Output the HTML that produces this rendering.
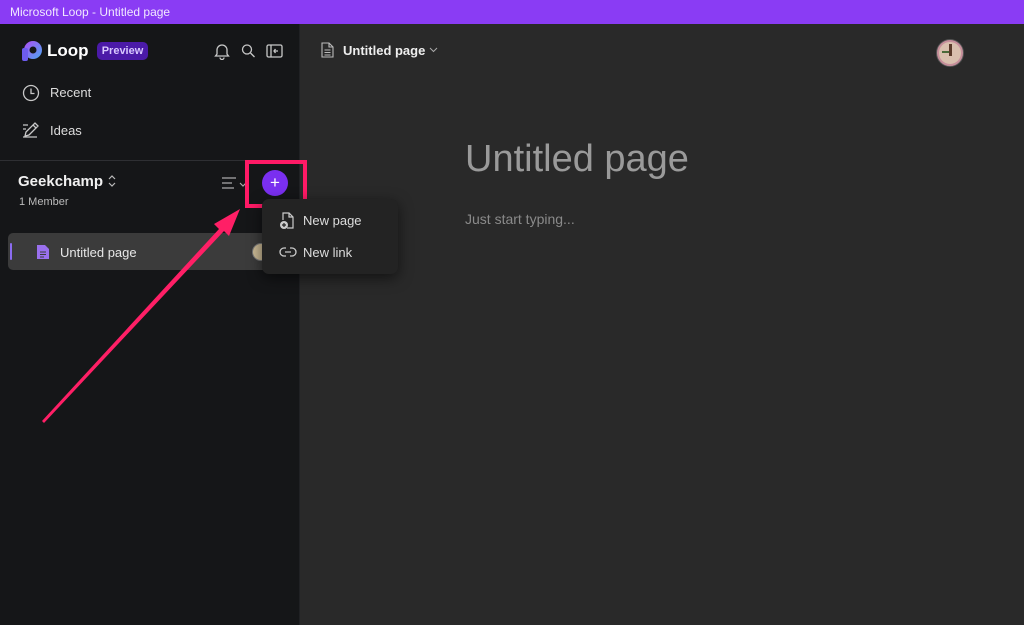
<!DOCTYPE html>
<html><head><meta charset="utf-8"><style>
*{margin:0;padding:0;box-sizing:border-box}
body{width:1024px;height:625px;overflow:hidden;background:#292929;font-family:"Liberation Sans",sans-serif;position:relative;color:#e6e6e6}
.tb{position:absolute;left:0;top:0;width:1024px;height:24px;background:#8a3cf4;color:#f0e8ff;font-size:12px;line-height:24px;padding-left:10px}
.sb{position:absolute;left:0;top:24px;width:300px;height:601px;background:#151618;border-right:1px solid #202124}
.a{position:absolute}
.t{position:absolute;white-space:nowrap}
</style></head><body>
<div class="tb">Microsoft Loop - Untitled page</div>
<div class="sb"></div>
<svg class="a" style="left:21px;top:40px" width="22" height="22" viewBox="0 0 22 22"><defs><linearGradient id="g" x1="0" y1="0" x2="1" y2="1"><stop offset="0" stop-color="#b04cf5"/><stop offset="1" stop-color="#4aa8f0"/></linearGradient></defs><circle cx="12" cy="10" r="9" fill="url(#g)"/><rect x="1" y="8" width="6" height="13" rx="2" fill="#6d5cf0"/><circle cx="12" cy="10" r="3.5" fill="#151618"/></svg>
<div class="t" style="left:47px;top:41px;font-size:17px;font-weight:bold;color:#fff">Loop</div>
<div class="a" style="left:97px;top:42px;width:51px;height:18px;background:#4b1aa8;border-radius:5px;color:#d8c8ff;font-size:11px;font-weight:bold;text-align:center;line-height:18px">Preview</div>
<svg class="a" style="left:212px;top:42px" width="72" height="18" viewBox="0 0 72 18" fill="none" stroke="#c8c8c8" stroke-width="1.3"><path d="M5 12V8a5 5 0 0 1 10 0v4l1.5 2h-13z M8 15.5a2 2 0 0 0 4 0"/><circle cx="35" cy="7.5" r="4.5"/><path d="M38.5 11l4 4"/><rect x="55" y="3" width="15" height="12" rx="1.5"/><path d="M59 3v12 M66 9h-4 M63.5 7l-1.5 2 1.5 2"/></svg>
<svg class="a" style="left:22px;top:84px" width="18" height="18" viewBox="0 0 18 18" fill="none" stroke="#c8c8c8" stroke-width="1.3"><circle cx="9" cy="9" r="7.5"/><path d="M9 4.5V9.5h3.5"/></svg>
<div class="t" style="left:50px;top:85px;font-size:13px;color:#ddd">Recent</div>
<svg class="a" style="left:22px;top:121px" width="18" height="18" viewBox="0 0 18 18" fill="none" stroke="#c8c8c8" stroke-width="1.3"><path d="M3 15l1-4L13 2l3 3-9 9z M11 4l3 3 M1 4h5 M1 8h3 M1 16h14"/></svg>
<div class="t" style="left:50px;top:123px;font-size:13px;color:#ddd">Ideas</div>
<div class="a" style="left:0;top:160px;width:300px;height:1px;background:#2e2f33"></div>
<div class="t" style="left:18px;top:173px;font-size:15px;font-weight:bold;color:#f0f0f0">Geekchamp</div>
<svg class="a" style="left:106px;top:173px" width="12" height="16" viewBox="0 0 12 16" fill="none" stroke="#bbb" stroke-width="1.2"><path d="M3 6l3-3 3 3 M3 10l3 3 3-3"/></svg>
<div class="t" style="left:19px;top:196px;font-size:11px;color:#bbb">1 Member</div>
<svg class="a" style="left:221px;top:176px" width="28" height="14" viewBox="0 0 28 14" fill="none" stroke="#aaa" stroke-width="1.2"><path d="M1 2h14 M1 7h10 M1 12h12 M19 7l3 3 3-3"/></svg>
<div class="a" style="left:245px;top:160px;width:62px;height:48px;border:4px solid #ff1a66"></div>
<div class="a" style="left:262px;top:170px;width:26px;height:26px;border-radius:50%;background:#7a2ff0;color:#fff;text-align:center;line-height:25px;font-size:17px">+</div>
<div class="a" style="left:8px;top:233px;width:265px;height:37px;background:#3b3b3b;border-radius:5px"></div>
<div class="a" style="left:10px;top:243px;width:2px;height:17px;background:#8b6cf0;border-radius:1px"></div>
<svg class="a" style="left:36px;top:244px" width="14" height="16" viewBox="0 0 14 16"><path d="M1 1h8l4 4v10H1z" fill="#9a70ee"/><path d="M4 8h6M4 10.5h6M4 13h4" stroke="#3b3b3b" stroke-width="1"/></svg>
<div class="t" style="left:60px;top:245px;font-size:13px;color:#e8e8e8">Untitled page</div>
<div class="a" style="left:252px;top:243px;width:18px;height:18px;border-radius:50%;background:#c9b894;border:1px solid #777"></div>
<div class="a" style="left:262px;top:199px;width:136px;height:75px;background:#232323;border-radius:7px;box-shadow:0 4px 14px rgba(0,0,0,.55)"></div>
<svg class="a" style="left:278px;top:211px" width="18" height="20" viewBox="0 0 18 20" fill="none" stroke="#ccc" stroke-width="1.2"><path d="M5 9V2h6l4 4v11H9 M11 2v4h4"/><circle cx="6" cy="14" r="4" fill="#ccc" stroke="none"/><path d="M6 12v4M4 14h4" stroke="#232323"/></svg>
<div class="t" style="left:303px;top:213px;font-size:13px;color:#ddd">New page</div>
<svg class="a" style="left:279px;top:245px" width="18" height="14" viewBox="0 0 18 14" fill="none" stroke="#ccc" stroke-width="1.3"><path d="M7 3H5a4 4 0 0 0 0 8h2 M11 3h2a4 4 0 0 1 0 8h-2 M6 7h6"/></svg>
<div class="t" style="left:303px;top:245px;font-size:13px;color:#ddd">New link</div>
<svg class="a" style="left:321px;top:42px" width="13" height="16" viewBox="0 0 13 16" fill="none" stroke="#bbb" stroke-width="1.1"><path d="M1 1h7l4 4v10H1z M8 1v4h4 M3.5 8h6M3.5 10.5h6M3.5 13h6"/></svg>
<div class="t" style="left:343px;top:43px;font-size:13px;font-weight:bold;color:#eee">Untitled page</div>
<svg class="a" style="left:429px;top:47px" width="9" height="6" viewBox="0 0 9 6" fill="none" stroke="#aaa" stroke-width="1"><path d="M1 1l3.5 3.5L8 1"/></svg>
<div class="a" style="left:937px;top:40px;width:26px;height:26px;border-radius:50%;background:#d9bfae;border:2px solid #c68f9b;box-shadow:0 0 0 1px #555"></div>
<div class="a" style="left:942px;top:51px;width:10px;height:2px;background:#4a6a3a"></div>
<div class="a" style="left:949px;top:44px;width:3px;height:12px;background:#5a3a2a"></div>
<div class="t" style="left:465px;top:138px;font-size:38px;color:#9a9a9a">Untitled page</div>
<div class="t" style="left:465px;top:211px;font-size:14px;color:#8a8a8a">Just start typing...</div>
<svg class="a" style="left:0;top:0" width="300" height="625" viewBox="0 0 300 625"><path d="M42 421L219 229L214 224L240 209L229 236L224 231L44 423Z" fill="#ff1f66"/></svg>
</body></html>
